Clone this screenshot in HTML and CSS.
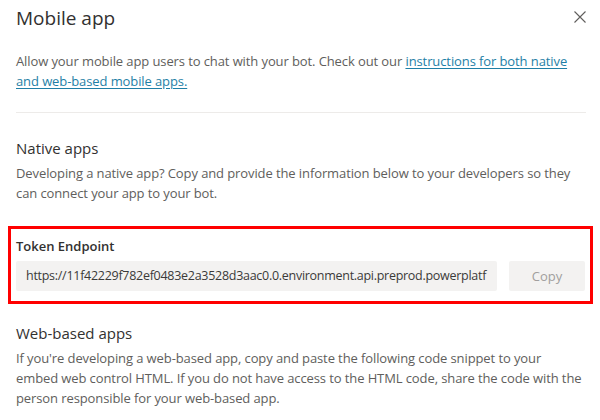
FILE: index.html
```html
<!DOCTYPE html>
<html lang="en">
<head>
<meta charset="utf-8">
<title>Mobile app</title>
<link rel="stylesheet" href="styles.css">
</head>
<body>
<div class="panel">
  <header class="panel-header">
    <h1 class="title">Mobile app</h1>
    <button class="close" aria-label="Close">
      <svg width="12" height="12" viewBox="0 0 12 12"><path d="M0.5 0.5 L11.5 11.5 M11.5 0.5 L0.5 11.5" stroke="#605e5c" stroke-width="1.1" fill="none"/></svg>
    </button>
  </header>
  <p class="intro">Allow your mobile app users to chat with your bot. Check out our <a href="#" class="link">instructions for both native and web-based mobile apps.</a></p>
  <hr class="divider">
  <section class="section">
    <h2 class="section-title">Native apps</h2>
    <p class="text">Developing a native app? Copy and provide the information below to your developers so they can connect your app to your bot.</p>
  </section>
  <div class="highlight">
    <div class="field-label">Token Endpoint</div>
    <div class="field-row">
      <div class="field-input">https://11f42229f782ef0483e2a3528d3aac0.0.environment.api.preprod.powerplatf</div>
      <button class="copy-btn" disabled>Copy</button>
    </div>
  </div>
  <section class="section web">
    <h2 class="section-title">Web-based apps</h2>
    <p class="text">If you're developing a web-based app, copy and paste the following code snippet to your embed web control HTML. If you do not have access to the HTML code, share the code with the person responsible for your web-based app.</p>
  </section>
</div>
</body>
</html>
```
FILE: styles.css
```css
html, body {
  margin: 0;
  padding: 0;
  background: #ffffff;
}
body {
  font-family: "Open Sans", "Noto Sans", sans-serif;
  color: #605e5c;
  font-size: 13px;
  letter-spacing: -0.1px;
  width: 600px;
  height: 420px;
  overflow: hidden;
}
.panel {
  padding: 4px 14px 0 16px;
}
.panel-header {
  display: flex;
  justify-content: space-between;
  align-items: flex-start;
}
.title {
  margin: 0;
  font-size: 19px;
  font-weight: 500;
  line-height: 28px;
  color: #323130;
  letter-spacing: 0;
}
.close {
  border: none;
  background: none;
  padding: 0;
  margin: 7px 0 0 0;
  width: 12px;
  height: 12px;
  display: flex;
}
.intro {
  margin: 19px 0 0 0;
  line-height: 20px;
}
.link {
  color: #1f7fa6;
  text-decoration: underline;
  text-underline-offset: 2px;
}
.divider {
  border: none;
  border-top: 1px solid #edebe9;
  margin: 21px 0 0 0;
}
.section {
  margin-top: 24px;
}
.section-title {
  margin: 0;
  font-size: 15px;
  font-weight: 500;
  line-height: 22px;
  color: #323130;
  letter-spacing: 0;
}
.text {
  margin: 4px 0 0 0;
  line-height: 20px;
}
.highlight {
  margin: 23px -7px 0 -8px;
  border: 3px solid #ff0000;
  padding: 7px 5px 10px 5px;
}
.field-label {
  font-size: 13px;
  font-weight: 600;
  line-height: 20px;
  color: #323130;
  letter-spacing: 0;
}
.field-row {
  display: flex;
  gap: 12px;
  margin-top: 5px;
}
.field-input {
  flex: 1;
  min-width: 0;
  height: 30px;
  line-height: 30px;
  background: #f3f2f1;
  border-radius: 2px;
  padding: 0 10px;
  white-space: nowrap;
  overflow: hidden;
  color: #3b3a39;
  font-size: 12.5px;
  letter-spacing: -0.28px;
}
.copy-btn {
  width: 76px;
  height: 30px;
  border: none;
  border-radius: 2px;
  background: #f3f2f1;
  color: #a19f9d;
  font-family: inherit;
  font-size: 13px;
  padding: 0;
}
.web {
  margin-top: 18px;
}
```
